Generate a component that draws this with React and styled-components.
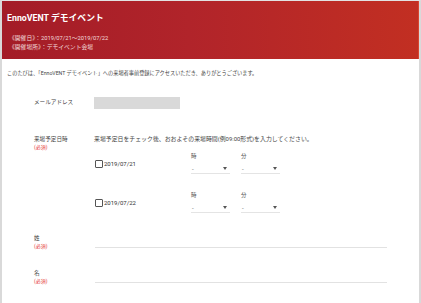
import React from "react";
import styled, { createGlobalStyle } from "styled-components";

const GlobalStyle = createGlobalStyle`
  html, body {
    margin: 0;
    padding: 0;
    background: #ffffff;
  }
  body {
    font-family: Roboto, "Noto Sans CJK JP", "Noto Sans", sans-serif;
    color: #333;
  }
`;

const Frame = styled.div`
  width: 421px;
  height: 303px;
  box-sizing: border-box;
  border-left: 2px solid #d9d9d9;
  border-right: 2px solid #d9d9d9;
  border-top: 1px solid #e2e2e2;
  overflow: hidden;
  background: #fff;
`;

const Header = styled.header`
  height: 58px;
  box-sizing: border-box;
  padding: 11px 5px 0 5px;
  background: linear-gradient(90deg, #a31c27 0%, #b1242a 45%, #c22f22 100%);
  border-right: 1px solid #d8452f;
  color: #fff;
`;

const Title = styled.h1`
  margin: 0;
  font-size: 8.8px;
  line-height: 13px;
  font-weight: 700;
`;

const Meta = styled.div`
  margin: 9px 0 0 2px;
  font-size: 5.8px;
  line-height: 9px;
  color: #f3dcdc;
`;

const Main = styled.main`
  padding: 10px 32px 0 5px;
`;

const Intro = styled.p`
  margin: 0;
  font-size: 5.2px;
  line-height: 9px;
  color: #444;
`;

const Form = styled.div`
  padding-left: 27px;
`;

const Row = styled.div`
  display: grid;
  grid-template-columns: 60px 1fr;
  margin-top: ${(p) => p.$gap}px;
`;

const Label = styled.div`
  font-size: 5.6px;
  line-height: 10px;
  color: #444;
`;

const Required = styled.div`
  font-size: 5px;
  line-height: 7px;
  color: #e53935;
`;

const GrayBox = styled.div`
  width: 86px;
  height: 12px;
  background: #d9d9d9;
`;

const Note = styled.div`
  font-size: 5.9px;
  line-height: 10px;
  color: #444;
`;

const DateLine = styled.div`
  display: flex;
  align-items: center;
  margin-top: ${(p) => p.$gap}px;
`;

const Check = styled.label`
  display: flex;
  align-items: center;
  width: 96px;
  font-size: 6px;
  color: #333;
  margin-left: 1px;
  margin-top: 1px;
`;

const Box = styled.span`
  width: 6px;
  height: 6px;
  border: 1px solid #555;
  border-radius: 1px;
  margin-right: 1px;
`;

const TimeGroup = styled.div`
  display: flex;
  gap: 11px;
`;

const TimeField = styled.div`
  width: 39px;
`;

const TimeLabel = styled.div`
  font-size: 5.5px;
  line-height: 9px;
  color: #555;
`;

const Select = styled.div`
  display: flex;
  justify-content: space-between;
  align-items: center;
  height: 13px;
  box-sizing: border-box;
  padding: 2px 3px 0 1px;
  border-bottom: 1px solid #e4e4e4;
  font-size: 6px;
  color: #555;
`;

const Arrow = styled.span`
  width: 0;
  height: 0;
  border-left: 2px solid transparent;
  border-right: 2px solid transparent;
  border-top: 3px solid #555;
`;

const LineInput = styled.div`
  height: 14px;
  margin-left: 1px;
  border-bottom: 1px solid #e2e2e2;
`;

const NameRow = styled(Row)`
  height: 35px;
`;

const dates = ["2019/07/21", "2019/07/22"];

export default function App() {
  return (
    <>
      <GlobalStyle />
      <Frame>
        <Header>
          <Title>EnnoVENT デモイベント</Title>
          <Meta>
            <div>《開催日》：2019/07/21～2019/07/22</div>
            <div>《開催場所》：デモイベント会場</div>
          </Meta>
        </Header>
        <Main>
          <Intro>
            このたびは、「EnnoVENT デモイベント」への来場者事前登録にアクセスいただき、ありがとうございます。
          </Intro>
          <Form>
            <Row $gap={19}>
              <Label>メールアドレス</Label>
              <GrayBox />
            </Row>
            <Row $gap={25}>
              <div>
                <Label>来場予定日時</Label>
                <Required>(必須)</Required>
              </div>
              <div>
                <Note>来場予定日をチェック後、おおよその来場時間(例09:00形式)を入力してください。</Note>
                {dates.map((d, i) => (
                  <DateLine key={d} $gap={i === 0 ? 8 : 17}>
                    <Check>
                      <Box />
                      {d}
                    </Check>
                    <TimeGroup>
                      {["時", "分"].map((t) => (
                        <TimeField key={t}>
                          <TimeLabel>{t}</TimeLabel>
                          <Select>
                            <span>-</span>
                            <Arrow />
                          </Select>
                        </TimeField>
                      ))}
                    </TimeGroup>
                  </DateLine>
                ))}
              </div>
            </Row>
            {["姓", "名"].map((n, i) => (
              <NameRow key={n} $gap={i === 0 ? 20 : 0}>
                <div>
                  <Label>{n}</Label>
                  <Required>(必須)</Required>
                </div>
                <LineInput />
              </NameRow>
            ))}
          </Form>
        </Main>
      </Frame>
    </>
  );
}
